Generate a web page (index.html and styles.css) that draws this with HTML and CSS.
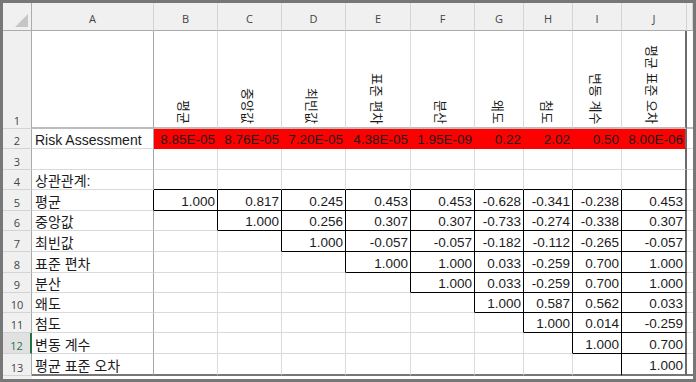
FILE: index.html
```html
<!DOCTYPE html>
<html lang="ko">
<head>
  <meta charset="UTF-8">
  <title>Risk Assessment - 상관관계</title>
  <link rel="stylesheet" href="styles.css">
</head>
<body>
  <div class="window">
    <table class="sheet">
      <colgroup>
        <col class="w-head">
        <col class="w-a">
        <col class="w-b"><col class="w-b"><col class="w-b"><col class="w-e"><col class="w-b">
        <col class="w-g"><col class="w-g"><col class="w-g">
        <col class="w-e">
        <col class="w-fill">
      </colgroup>
      <thead>
        <tr class="heads">
          <th class="corner"><span class="corner-mark"></span></th>
          <th>A</th><th>B</th><th>C</th><th>D</th><th>E</th>
          <th>F</th><th>G</th><th>H</th><th>I</th><th>J</th>
          <th></th>
        </tr>
      </thead>
      <tbody>
        <!-- stat names, rotated -->
        <tr class="r1">
          <th>1</th><td></td>
          <td class="vert"><span>평균</span></td>
          <td class="vert"><span>중앙값</span></td>
          <td class="vert"><span>최빈값</span></td>
          <td class="vert"><span>표준 편차</span></td>
          <td class="vert"><span>분산</span></td>
          <td class="vert"><span>왜도</span></td>
          <td class="vert"><span>첨도</span></td>
          <td class="vert"><span>변동 계수</span></td>
          <td class="vert"><span>평균 표준 오차</span></td>
          <td></td>
        </tr>
        <tr class="h20">
          <th>2</th><td>Risk Assessment</td>
          <td class="hot">8.85E-05</td>
          <td class="hot">8.76E-05</td>
          <td class="hot">7.20E-05</td>
          <td class="hot">4.38E-05</td>
          <td class="hot">1.95E-09</td>
          <td class="hot">0.22</td>
          <td class="hot">2.02</td>
          <td class="hot">0.50</td>
          <td class="hot">8.00E-06</td>
          <td></td>
        </tr>
        <tr class="h21">
          <th>3</th><td></td>
          <td></td><td></td><td></td><td></td><td></td><td></td><td></td><td></td><td></td>
          <td></td>
        </tr>
        <tr class="h20">
          <th>4</th><td>상관관계:</td>
          <td class="mb"></td><td class="mb"></td><td class="mb"></td><td class="mb"></td><td class="mb"></td>
          <td class="mb"></td><td class="mb"></td><td class="mb"></td><td class="mb"></td>
          <td></td>
        </tr>
        <!-- correlation matrix, upper triangle -->
        <tr class="h21">
          <th>5</th><td class="mr">평균</td>
          <td class="m">1.000</td><td class="m">0.817</td><td class="m">0.245</td><td class="m">0.453</td><td class="m">0.453</td>
          <td class="m">-0.628</td><td class="m">-0.341</td><td class="m">-0.238</td><td class="m">0.453</td>
          <td></td>
        </tr>
        <tr class="h20">
          <th>6</th><td>중앙값</td>
          <td class="mr"></td><td class="m">1.000</td><td class="m">0.256</td><td class="m">0.307</td><td class="m">0.307</td>
          <td class="m">-0.733</td><td class="m">-0.274</td><td class="m">-0.338</td><td class="m">0.307</td>
          <td></td>
        </tr>
        <tr class="h21">
          <th>7</th><td>최빈값</td>
          <td></td><td class="mr"></td><td class="m">1.000</td><td class="m">-0.057</td><td class="m">-0.057</td>
          <td class="m">-0.182</td><td class="m">-0.112</td><td class="m">-0.265</td><td class="m">-0.057</td>
          <td></td>
        </tr>
        <tr class="h21">
          <th>8</th><td>표준 편차</td>
          <td></td><td></td><td class="mr"></td><td class="m">1.000</td><td class="m">1.000</td>
          <td class="m">0.033</td><td class="m">-0.259</td><td class="m">0.700</td><td class="m">1.000</td>
          <td></td>
        </tr>
        <tr class="h20">
          <th>9</th><td>분산</td>
          <td></td><td></td><td></td><td class="mr"></td><td class="m">1.000</td>
          <td class="m">0.033</td><td class="m">-0.259</td><td class="m">0.700</td><td class="m">1.000</td>
          <td></td>
        </tr>
        <tr class="h20">
          <th>10</th><td>왜도</td>
          <td></td><td></td><td></td><td></td><td class="mr"></td>
          <td class="m">1.000</td><td class="m">0.587</td><td class="m">0.562</td><td class="m">0.033</td>
          <td></td>
        </tr>
        <tr class="h20">
          <th>11</th><td>첨도</td>
          <td></td><td></td><td></td><td></td><td></td>
          <td class="mr"></td><td class="m">1.000</td><td class="m">0.014</td><td class="m">-0.259</td>
          <td></td>
        </tr>
        <tr class="h21 sel">
          <th>12</th><td>변동 계수</td>
          <td></td><td></td><td></td><td></td><td></td>
          <td></td><td class="mr"></td><td class="m">1.000</td><td class="m">0.700</td>
          <td></td>
        </tr>
        <tr class="end">
          <th>13</th><td>평균 표준 오차</td>
          <td></td><td></td><td></td><td></td><td></td>
          <td></td><td></td><td class="mr"></td><td class="m">1.000</td>
          <td></td>
        </tr>
      </tbody>
    </table>
  </div>
</body>
</html>
```

FILE: styles.css
```css
* { box-sizing: border-box; }

body {
  margin: 0;
  background: #fff;
}

.window {
  width: 696px;
  height: 382px;
  border: 3px solid #777;
  overflow: hidden;
  /* row-header strip keeps going below the last row */
  background: linear-gradient(to right, #f0f0f0 29px, #fff 29px);
}

.sheet {
  table-layout: fixed;
  width: 690px;
  border-collapse: separate;
  border-spacing: 0;
  font-family: 'Liberation Sans', 'Noto Sans CJK KR', sans-serif;
  font-size: 14px;
  color: #1b1b1b;
}

.w-head { width: 29px; }
.w-a { width: 122px; }
.w-b { width: 64px; }
.w-e { width: 65px; }
.w-g { width: 49px; }
.w-fill { width: 6px; }

.sheet th,
.sheet td {
  padding: 0 2px 0 3px;
  border-right: 1px solid #dadada;
  border-bottom: 1px solid #dadada;
  white-space: nowrap;
  overflow: hidden;
  vertical-align: bottom;
  line-height: 16px;
  background: #fff;
}

/* column letters */
.heads th {
  height: 28px;
  background: #f0f0f0;
  border-bottom: 1px solid #ababab;
  border-right: 1px solid #d4d4d4;
  font: normal 11px 'Open Sans', sans-serif;
  line-height: 14px;
  color: #444;
  text-align: center;
  padding: 0 0 4px;
}

.heads th.corner {
  border-right-color: #ababab;
  padding-bottom: 3px;
}

.corner-mark {
  display: block;
  width: 0;
  height: 0;
  margin: 0 3px 0 auto;
  border-left: 13px solid transparent;
  border-bottom: 13px solid #c6c6c6;
}

/* row numbers */
.sheet tbody th {
  background: #f0f0f0;
  border-right: 1px solid #ababab;
  border-bottom-color: #d4d4d4;
  font: normal 11px 'Open Sans', sans-serif;
  line-height: 15px;
  color: #444;
  text-align: center;
  padding: 0;
}

.sheet tr.sel th {
  background: #e1e1e1;
  color: #217346;
  border-right: 2px solid #217346;
}

.r1 { height: 98px; }
.h20 { height: 20px; }
.h21 { height: 21px; }
.end { height: 22px; }

/* frozen pane edges */
.sheet tbody td:first-of-type { border-right-color: #a6a6a6; }
.sheet tr.r1 td { border-bottom: 2px solid #bcbcbc; }

.vert {
  text-align: center;
  padding-bottom: 5px;
}

.vert span {
  display: inline-block;
  writing-mode: vertical-rl;
  text-orientation: sideways;
  font-size: 13px;
  line-height: 16px;
  margin-right: 6px;
}

.sheet td.hot {
  background: #ff0000;
  border-right-color: #ff0000;
  border-bottom-color: #ff0000;
  text-align: right;
  font-size: 13.5px;
}

.sheet td.m {
  text-align: right;
  font-size: 13.5px;
  border-right-color: #000;
  border-bottom-color: #000;
}

.sheet tbody td.mr { border-right-color: #000; }
.sheet td.mb { border-bottom-color: #000; }

/* window edge on the right of column J */
.sheet tbody td:nth-last-child(2) { border-right: 2px solid #6b6b6b; }
.sheet tbody td:last-child { border-right: none; }

.sheet tr.end td { border-bottom: 2px solid #777; }
```
